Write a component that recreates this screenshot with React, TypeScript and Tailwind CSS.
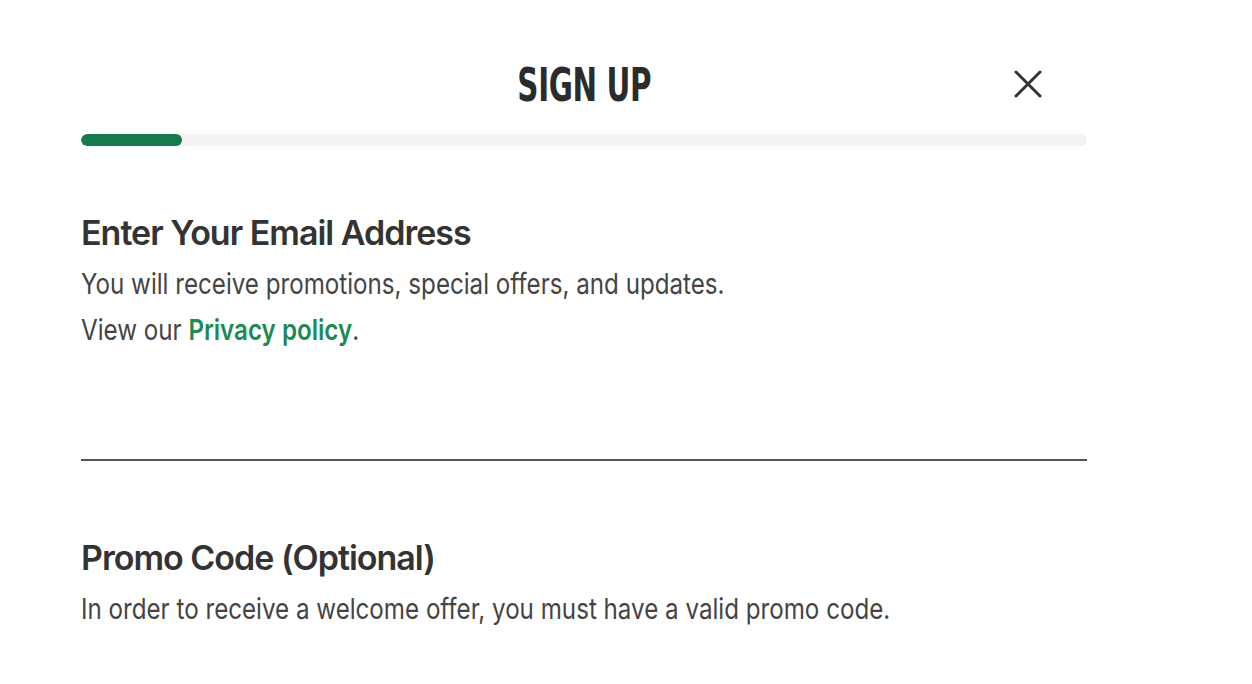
import React from 'react';

const SignUpStep: React.FC = () => {
    const progress = 10;

    return (
        <div className="w-[1252px] h-[684px] bg-white overflow-hidden font-['Inter',sans-serif]">
            <div className="ml-[81px] w-[1006px]">
                {/* Header */}
                <div className="grid grid-cols-[1fr_auto_1fr] items-center h-[84px] mt-[43px]">
                    <div />
                    <h1 className="text-[46px] leading-none font-bold text-[#2b2b2b] uppercase tracking-[-0.5px] scale-x-[0.71] font-['DejaVu_Sans_Condensed','DejaVu_Sans',sans-serif]">
                        Sign Up
                    </h1>
                    <div className="flex justify-end pr-[44px]">
                        <button aria-label="Close" className="w-[30px] h-[30px] -mt-[2px] text-[#333]">
                            <svg viewBox="0 0 30 30" className="w-full h-full" fill="none" stroke="currentColor" strokeWidth="3" strokeLinecap="round">
                                <path d="M3 3 L27 27 M27 3 L3 27" />
                            </svg>
                        </button>
                    </div>
                </div>

                {/* Progress */}
                <div className="mt-[7px] h-[12px] rounded-full bg-[#f3f3f3] overflow-hidden">
                    <div className="h-full rounded-full bg-[#157a4c]" style={{ width: `${progress}%` }} />
                </div>

                {/* Email */}
                <h2 className="mt-[67px] text-[34px] leading-[40px] font-semibold tracking-[-1px] text-[#333]">Enter Your Email Address</h2>
                <p className="mt-[8px] text-[29px] leading-[46px] text-[#444] scale-x-[0.833] origin-left whitespace-nowrap">
                    You will receive promotions, special offers, and updates.
                    <br />
                    View our <a className="font-semibold text-[#1d8a55]">Privacy policy</a>.
                </p>
                <div className="mt-[106px] h-[2px] bg-[#555]" />

                {/* Promo */}
                <h2 className="mt-[77px] text-[34px] leading-[40px] font-semibold tracking-[-1px] text-[#333]">Promo Code (Optional)</h2>
                <p className="mt-[8px] text-[29px] leading-[46px] text-[#444] scale-x-[0.833] origin-left whitespace-nowrap">
                    In order to receive a welcome offer, you must have a valid promo code.
                </p>
            </div>
        </div>
    );
};

export default SignUpStep;
